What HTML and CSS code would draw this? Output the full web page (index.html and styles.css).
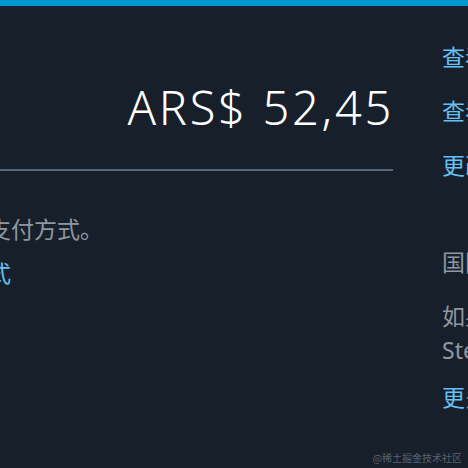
FILE: index.html
```html
<!DOCTYPE html>
<html lang="zh-CN">
<head>
<meta charset="utf-8">
<title>购物车</title>
<link rel="stylesheet" href="styles.css">
</head>
<body>
<div class="topbar"></div>
<div class="page">
  <div class="main">
    <div class="price">ARS$ 52,45</div>
    <div class="rule"></div>
    <p class="note">结账时选择支付方式。</p>
    <a class="more-link" href="#">管理支付方式</a>
  </div>
  <div class="side">
    <ul class="links">
      <li><a href="#">查看我的愿望单</a></li>
      <li><a href="#">查看我的购买记录</a></li>
      <li><a href="#">更改我的商店偏好</a></li>
    </ul>
    <h3 class="side-title">国际用户</h3>
    <p class="side-text">如果您所在的国家/地区不同，<br>Steam 将以当地货币显示价格。</p>
    <a class="side-link" href="#">更多信息</a>
  </div>
</div>
<div class="watermark">@稀土掘金技术社区</div>
</body>
</html>
```

FILE: styles.css
```css
html, body {
  margin: 0;
  padding: 0;
}
body {
  width: 468px;
  height: 468px;
  overflow: hidden;
  background: #171f2b;
  font-family: "Noto Sans", "Noto Sans CJK SC", sans-serif;
  position: relative;
}
.topbar {
  height: 6px;
  background: #0097d1;
}
.page {
  display: flex;
  gap: 49px;
  margin-left: -127px;
}
.main {
  flex: none;
  width: 520px;
}
.price {
  margin-top: 73px;
  font-size: 47px;
  font-weight: 300;
  line-height: 56px;
  color: #ffffff;
  text-align: right;
  letter-spacing: 2.7px;
  margin-right: -1px;
}
.rule {
  margin-top: 34px;
  height: 2px;
  background: #56677a;
}
.note {
  margin: 41px 0 0;
  font-size: 23px;
  line-height: 34px;
  color: #8f98a0;
  white-space: nowrap;
}
.more-link {
  display: block;
  margin-top: 10px;
  font-size: 23px;
  line-height: 34px;
  color: #66c0f4;
  text-decoration: none;
  white-space: nowrap;
}
.side {
  flex: none;
  padding-top: 34px;
  white-space: nowrap;
  font-size: 23px;
  line-height: 34px;
}
.links {
  list-style: none;
  margin: 0;
  padding: 0;
  display: flex;
  flex-direction: column;
  gap: 20px;
}
.links a, .side-link {
  color: #66c0f4;
  text-decoration: none;
}
.side-title {
  margin: 63px 0 0;
  font-size: 23px;
  font-weight: normal;
  color: #8f98a0;
}
.side-text {
  margin: 20px 0 0;
  color: #8f98a0;
}
.side-link {
  display: block;
  margin-top: 13px;
}
.watermark {
  position: absolute;
  right: 6px;
  bottom: 4px;
  font-size: 10px;
  line-height: 12px;
  color: #5b626b;
  font-family: "Noto Sans CJK SC", sans-serif;
}
```
